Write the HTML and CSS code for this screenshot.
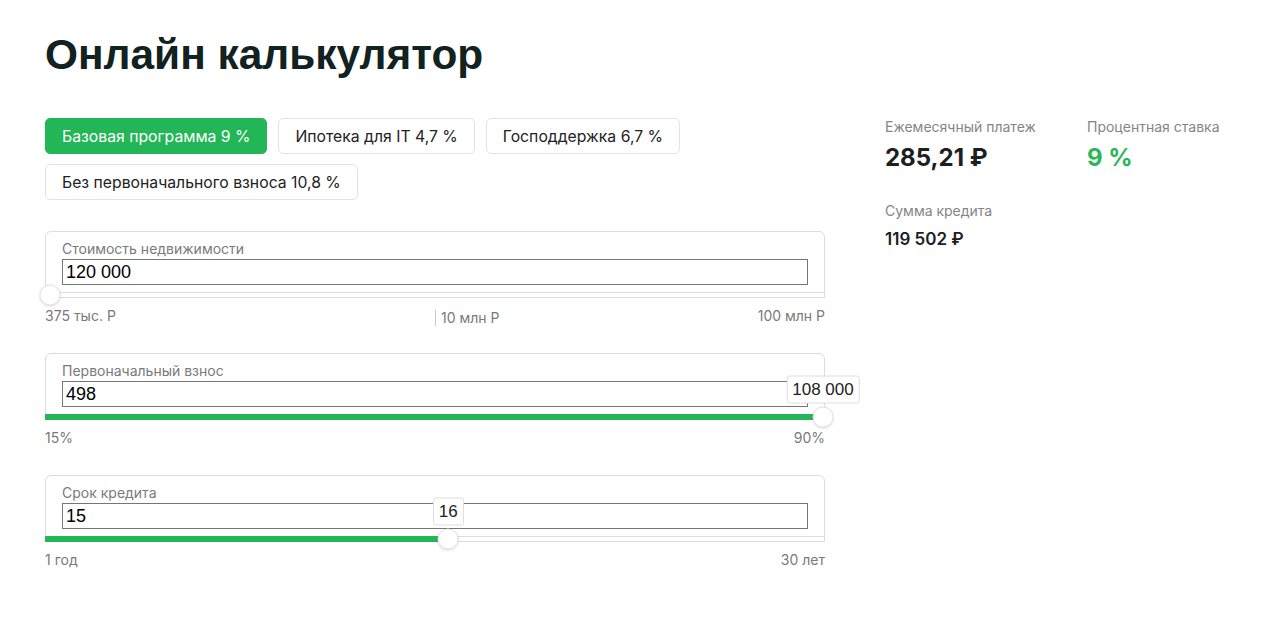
FILE: index.html
```html
<!DOCTYPE html>
<html lang="ru">
<head>
<meta charset="utf-8">
<title>Онлайн калькулятор</title>
<link rel="stylesheet" href="styles.css">
</head>
<body>
<div class="page">
  <h1 class="title">Онлайн калькулятор</h1>
  <div class="main">
    <div class="calc">
      <div class="tabs">
        <button class="tab tab-active">Базовая программа 9 %</button>
        <button class="tab">Ипотека для IT 4,7 %</button>
        <button class="tab">Господдержка 6,7 %</button>
        <button class="tab">Без первоначального взноса 10,8 %</button>
      </div>

      <div class="field">
        <div class="card">
          <label class="card-label">Стоимость недвижимости</label>
          <input class="card-input" type="text" value="120 000">
          <div class="track">
            <div class="fill" style="width:0%"></div>
            <div class="thumb" style="left:4px"></div>
          </div>
        </div>
        <div class="scale scale-split">
          <span class="scale-start">375 тыс. Р</span>
          <span class="scale-right"><span class="tick">10 млн Р</span><span>100 млн Р</span></span>
        </div>
      </div>

      <div class="field">
        <div class="card">
          <label class="card-label">Первоначальный взнос</label>
          <input class="card-input" type="text" value="498">
          <div class="track">
            <div class="fill" style="width:100%"></div>
            <div class="thumb" style="left:calc(100% - 1px)"><span class="tip">108 000</span></div>
          </div>
        </div>
        <div class="scale">
          <span>15%</span>
          <span>90%</span>
        </div>
      </div>

      <div class="field">
        <div class="card">
          <label class="card-label">Срок кредита</label>
          <input class="card-input" type="text" value="15">
          <div class="track">
            <div class="fill" style="width:51.7%"></div>
            <div class="thumb" style="left:51.7%"><span class="tip">16</span></div>
          </div>
        </div>
        <div class="scale">
          <span>1 год</span>
          <span>30 лет</span>
        </div>
      </div>
    </div>

    <div class="results">
      <div class="result">
        <div class="result-label">Ежемесячный платеж</div>
        <div class="result-value">285,21 ₽</div>
      </div>
      <div class="result">
        <div class="result-label">Процентная ставка</div>
        <div class="result-value result-green">9 %</div>
      </div>
      <div class="result result-wide">
        <div class="result-label">Сумма кредита</div>
        <div class="result-sub">119 502 ₽</div>
      </div>
    </div>
  </div>
</div>
</body>
</html>
```

FILE: styles.css
```css
* { box-sizing: border-box; }

body {
  margin: 0;
  background: #fff;
  font-family: Inter, "Noto Sans", sans-serif;
  color: #1f2322;
}

.page {
  padding: 30px 45px;
}

.title {
  margin: 0;
  font-family: "Liberation Sans", Arial, sans-serif;
  font-weight: 700;
  font-size: 42.4px;
  line-height: 50px;
  color: #112220;
}

.main {
  display: flex;
  gap: 60px;
  margin-top: 38px;
}

.calc {
  width: 780px;
  flex: none;
}

.tabs {
  display: flex;
  flex-wrap: wrap;
  gap: 10px 11px;
}

.tab {
  height: 36px;
  padding: 0 16px;
  border: 1px solid #e3e3e3;
  border-radius: 5px;
  background: #fff;
  font-family: Inter, "Noto Sans", sans-serif;
  font-size: 15.75px;
  color: #222;
  cursor: pointer;
}

.tab-active {
  background: #22b657;
  border-color: #22b657;
  color: #fff;
}

.field {
  margin-top: 31px;
}

.field + .field {
  margin-top: 29px;
}

.card {
  display: flex;
  flex-direction: column;
  border: 1px solid #dcdcdc;
  border-radius: 6px;
  padding: 8px 16px 0;
}

.card-label {
  font-size: 14px;
  line-height: 17px;
  color: #7a7a7a;
}

.card-input {
  margin-top: 2px;
  height: 26px;
  padding: 1px 3px;
  border: 1px solid #767676;
  font-family: "Liberation Sans", Arial, sans-serif;
  font-size: 18px;
  color: #000;
  background: #fff;
}

.track {
  position: relative;
  height: 6px;
  margin: 7px -17px -1px;
  border: 1px solid #dcdcdc;
  background: #fff;
}

.fill {
  height: 6px;
  margin: -1px;
  background: #22b657;
}

.thumb {
  position: absolute;
  top: 50%;
  width: 21px;
  height: 21px;
  border-radius: 50%;
  background: #fff;
  border: 1px solid #e2e2e2;
  box-shadow: 0 1px 3px rgba(0, 0, 0, 0.12);
  transform: translate(-50%, -50%);
}

.tip {
  position: absolute;
  bottom: 23px;
  left: 50%;
  transform: translateX(-50%);
  height: 28px;
  padding: 0 5px;
  border: 1px solid #dedede;
  border-radius: 3px;
  background: #fff;
  font-family: "Liberation Sans", Arial, sans-serif;
  font-size: 17px;
  line-height: 26px;
  color: #222;
  white-space: nowrap;
}

.scale {
  display: flex;
  justify-content: space-between;
  margin-top: 10px;
  height: 16px;
  font-size: 14px;
  line-height: 16px;
  color: #7a7a7a;
}

.scale-split {
  display: grid;
  grid-template-columns: 1fr 1fr;
}

.scale-right {
  display: flex;
  justify-content: space-between;
}

.tick {
  border-left: 1px solid #c8c8c8;
  padding-left: 5px;
  margin-top: 2px;
  line-height: 16px;
}

.results {
  display: grid;
  grid-template-columns: 202px 202px;
  row-gap: 29px;
  align-content: start;
}

.result-wide {
  grid-column: 1 / -1;
}

.result-label {
  font-size: 14px;
  line-height: 17px;
  color: #858585;
}

.result-value {
  margin-top: 8px;
  font-size: 24px;
  line-height: 30px;
  font-weight: 700;
  color: #1b201f;
}

.result-green {
  color: #2bb559;
}

.result-sub {
  margin-top: 9px;
  font-size: 17px;
  line-height: 22px;
  font-weight: 600;
  color: #1b201f;
}
```
